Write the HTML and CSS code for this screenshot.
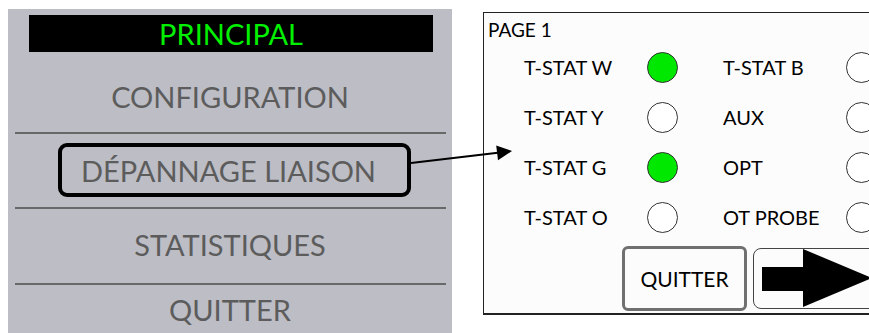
FILE: index.html
```html
<html lang="fr">
<head>
<title>Principal / Page 1</title>
<link rel="stylesheet" href="styles.css">
</head>
<body>
  <div class="menu">
    <div class="menu-title">PRINCIPAL</div>
    <div class="menu-item item-config">CONFIGURATION</div>
    <hr class="sep">
    <div class="menu-item item-link">
      <div class="selected">DÉPANNAGE LIAISON</div>
    </div>
    <hr class="sep">
    <div class="menu-item item-stats">STATISTIQUES</div>
    <hr class="sep">
    <div class="menu-item item-quit">QUITTER</div>
  </div>

  <div class="screen">
    <div class="page-title">PAGE 1</div>
    <div class="inputs">
      <span class="label">T-STAT W</span><span class="led on"></span>
      <span class="label">T-STAT B</span><span class="led"></span>
      <span class="label">T-STAT Y</span><span class="led"></span>
      <span class="label">AUX</span><span class="led"></span>
      <span class="label">T-STAT G</span><span class="led on"></span>
      <span class="label">OPT</span><span class="led"></span>
      <span class="label">T-STAT O</span><span class="led"></span>
      <span class="label">OT PROBE</span><span class="led"></span>
    </div>
    <div class="actions">
      <div class="btn-quit">QUITTER</div>
      <div class="btn-next">
        <svg width="125" height="60" viewBox="0 0 125 60">
          <polygon points="8,18 49,18 49,0 118,29 49,58 49,42 8,42" fill="#000"/>
        </svg>
      </div>
    </div>
  </div>

  <!-- pointer from the selected menu item to the screen it opens -->
  <svg class="pointer" width="869" height="333" viewBox="0 0 869 333">
    <line x1="411" y1="163" x2="500" y2="152.4" stroke="#000" stroke-width="2"/>
    <polygon points="512,151 498,160.2 496.2,145.4" fill="#000"/>
  </svg>
</body>
</html>
```

FILE: styles.css
```css
body {
  margin: 0;
  width: 869px;
  height: 333px;
  overflow: hidden;
  position: relative;
  display: flex;
  align-items: flex-start;
  background: #fff;
  font-family: Lato, "Liberation Sans", sans-serif;
}

/* left menu */
.menu {
  margin: 9px 0 0 8px;
  width: 444px;
  height: 324px;
  flex-shrink: 0;
  background: #bdbdc5;
  display: flex;
  flex-direction: column;
}

.menu-title {
  margin: 6px 19px 0 21px;
  height: 37px;
  background: #000;
  color: #00f000;
  font-size: 29px;
  display: flex;
  align-items: center;
  justify-content: center;
}

.menu-item {
  display: flex;
  align-items: center;
  justify-content: center;
  color: #5c5c5c;
  font-size: 29px;
}

.item-config {
  height: 80px;
  padding-top: 8px;
  box-sizing: border-box;
}

.item-link {
  height: 73px;
  justify-content: flex-start;
}

.item-stats {
  height: 74px;
  padding-bottom: 4px;
  box-sizing: border-box;
}

.item-quit {
  height: 48px;
}

.selected {
  margin: 0 0 1px 50px;
  width: 333px;
  height: 46px;
  border: 4px solid #000;
  border-radius: 9px;
  padding-right: 12px;
  display: flex;
  align-items: center;
  justify-content: center;
}

.sep {
  margin: 0 6px 0 7px;
  height: 0;
  border: none;
  border-top: 2px solid #686868;
}

/* right screen */
.screen {
  margin: 12px 0 0 31px;
  width: 430px;
  height: 300px;
  flex-shrink: 0;
  background: #fcfcfc;
  border: 1px solid #222;
  border-bottom-width: 2px;
  color: #000;
}

.page-title {
  padding: 5px 0 0 4px;
  font-size: 19px;
  line-height: 23px;
}

.inputs {
  margin-top: 1px;
  padding-left: 40px;
  display: grid;
  grid-template-columns: 123px 76px 123px 31px;
  grid-auto-rows: 50px;
  align-items: center;
  font-size: 20px;
}

.led {
  width: 29px;
  height: 29px;
  border: 1px solid #333;
  border-radius: 50%;
  background: #fff;
}

.led.on {
  background: #00e800;
}

.actions {
  margin-top: 4px;
  display: flex;
  align-items: flex-start;
}

.btn-quit {
  margin-left: 138px;
  width: 119px;
  height: 59px;
  border: 3px solid #707070;
  border-radius: 6px;
  display: flex;
  align-items: center;
  justify-content: center;
  font-size: 21px;
}

.btn-next {
  margin: 2px 0 0 6px;
  width: 140px;
  height: 59px;
  border: 1px solid #444;
  border-radius: 8px;
  overflow: hidden;
}

.btn-next svg {
  display: block;
}

.pointer {
  position: absolute;
  left: 0;
  top: 0;
  pointer-events: none;
}
```
